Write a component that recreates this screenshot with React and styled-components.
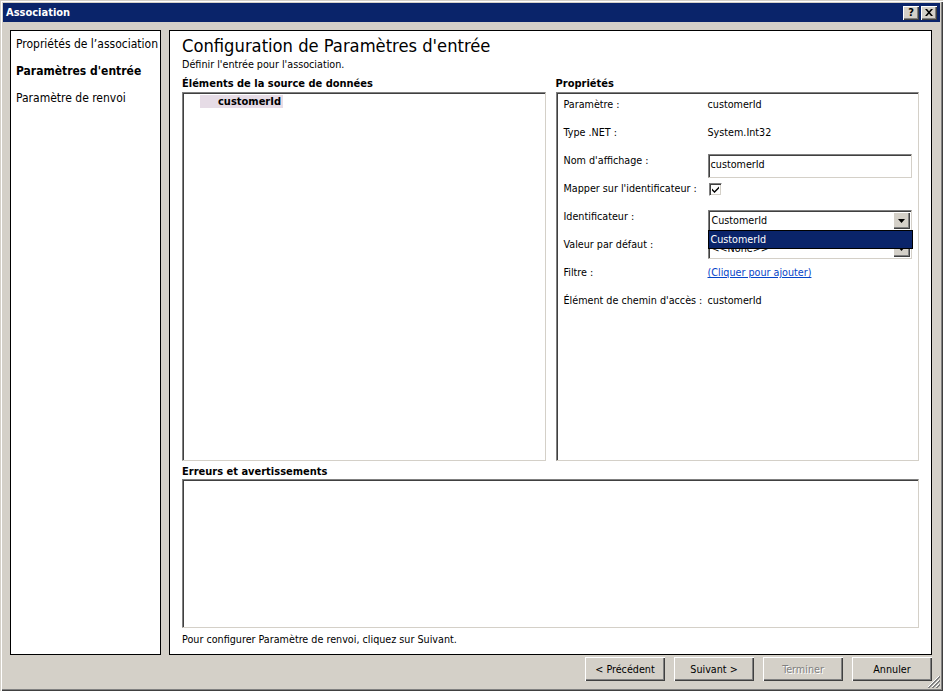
import React from "react";
import styled, { createGlobalStyle } from "styled-components";

const GlobalStyle = createGlobalStyle`
  html, body {
    margin: 0;
    padding: 0;
    background: #d4d0c8;
  }
  * {
    box-sizing: border-box;
  }
`;

const font = `"DejaVu Sans Condensed", "DejaVu Sans", Tahoma, sans-serif`;

const navItems = [
  { label: "Propriétés de l’association" },
  { label: "Paramètres d'entrée", active: true },
  { label: "Paramètre de renvoi" },
];

const props = [
  { label: "Paramètre :", value: "customerId" },
  { label: "Type .NET :", value: "System.Int32" },
  { label: "Nom d'affichage :", input: "customerId" },
  { label: "Mapper sur l'identificateur :", check: true },
  { label: "Identificateur :", combo: "CustomerId", open: true },
  { label: "Valeur par défaut :", combo: "<<None>>" },
  { label: "Filtre :", link: "(Cliquer pour ajouter)" },
  { label: "Élément de chemin d'accès :", value: "customerId" },
];

function ComboArrow() {
  return (
    <svg width="7" height="4" viewBox="0 0 7 4">
      <path d="M0 0h7L3.5 4z" fill="#000" />
    </svg>
  );
}

function PropValue({ row }) {
  if (row.input) return <TextInput>{row.input}</TextInput>;
  if (row.check)
    return (
      <CheckBox>
        <svg width="9" height="9" viewBox="0 0 9 9">
          <path d="M1 3.5l2.5 2.5L8 1.5v2L3.5 8 1 5.5z" fill="#000" />
        </svg>
      </CheckBox>
    );
  if (row.combo)
    return (
      <ComboWrap>
        <Combo>
          <ComboText>{row.combo}</ComboText>
          <ComboButton>
            <ComboArrow />
          </ComboButton>
        </Combo>
        {row.open && (
          <DropList>
            <DropItem>{row.combo}</DropItem>
          </DropList>
        )}
      </ComboWrap>
    );
  if (row.link) return <Link>{row.link}</Link>;
  return <ValueText>{row.value}</ValueText>;
}

export default function App() {
  return (
    <Window>
      <GlobalStyle />
      <TitleBar>
        <Title>Association</Title>
        <TitleButtons>
          <CaptionButton>?</CaptionButton>
          <CaptionButton>
            <svg width="8" height="7" viewBox="0 0 8 7">
              <path
                d="M0 0h2l2 2.2L6 0h2L5 3.5 8 7H6L4 4.8 2 7H0l3-3.5z"
                fill="#000"
              />
            </svg>
          </CaptionButton>
        </TitleButtons>
      </TitleBar>
      <Body>
        <Content>
          <NavPanel>
            {navItems.map((item) => (
              <NavItem key={item.label} active={item.active}>
                {item.label}
              </NavItem>
            ))}
          </NavPanel>
          <MainPanel>
            <Heading>Configuration de Paramètres d'entrée</Heading>
            <SubText>Définir l'entrée pour l'association.</SubText>
            <Columns>
              <Column>
                <SectionLabel>Éléments de la source de données</SectionLabel>
                <SunkenBox>
                  <TreeItem>customerId</TreeItem>
                </SunkenBox>
              </Column>
              <Column>
                <SectionLabel>Propriétés</SectionLabel>
                <SunkenBox>
                  <PropGrid>
                    {props.map((row) => (
                      <React.Fragment key={row.label}>
                        <PropLabel>{row.label}</PropLabel>
                        <PropCell>
                          <PropValue row={row} />
                        </PropCell>
                      </React.Fragment>
                    ))}
                  </PropGrid>
                </SunkenBox>
              </Column>
            </Columns>
            <SectionLabel>Erreurs et avertissements</SectionLabel>
            <ErrorBox />
            <Footnote>
              Pour configurer Paramètre de renvoi, cliquez sur Suivant.
            </Footnote>
          </MainPanel>
        </Content>
        <Footer>
          <Button>&lt; Précédent</Button>
          <Button>Suivant &gt;</Button>
          <Button disabled>Terminer</Button>
          <Button>Annuler</Button>
          <Grip>
            <svg width="13" height="13" viewBox="0 0 13 13">
              <path d="M12 1L1 12M12 5L5 12M12 9L9 12" stroke="#fff" />
              <path d="M13 1L1 13M13 5L5 13M13 9L9 13" stroke="#808080" />
              <path d="M13 2L2 13M13 6L6 13M13 10L10 13" stroke="#808080" />
            </svg>
          </Grip>
        </Footer>
      </Body>
    </Window>
  );
}

const Window = styled.div`
  width: 943px;
  height: 691px;
  display: flex;
  flex-direction: column;
  padding: 3px;
  background: #d4d0c8;
  font-family: ${font};
  font-size: 10.7px;
  color: #000;
  box-shadow: inset 1px 1px #d4d0c8, inset 2px 2px #fff,
    inset -1px -1px #404040, inset -2px -2px #808080;
`;

const TitleBar = styled.div`
  height: 19px;
  display: flex;
  align-items: center;
  justify-content: space-between;
  padding: 0 3px 0 3px;
  background: #0a246a;
`;

const Title = styled.div`
  color: #fff;
  font-weight: bold;
  font-size: 11px;
`;

const TitleButtons = styled.div`
  display: flex;
  gap: 2px;
`;

const CaptionButton = styled.div`
  width: 16px;
  height: 14px;
  display: flex;
  align-items: center;
  justify-content: center;
  background: #d4d0c8;
  font-weight: bold;
  font-size: 11px;
  box-shadow: inset 1px 1px #fff, inset -1px -1px #404040,
    inset -2px -2px #808080;
`;

const Body = styled.div`
  flex: 1;
  display: flex;
  flex-direction: column;
  padding: 8px 8px 0 7px;
  position: relative;
`;

const Content = styled.div`
  display: flex;
  gap: 8px;
  height: 625px;
`;

const NavPanel = styled.div`
  width: 151px;
  background: #fff;
  border: 1px solid #000;
`;

const NavItem = styled.div`
  height: 27px;
  line-height: 27px;
  padding-left: 5px;
  font-size: 12px;
  white-space: nowrap;
  font-weight: ${(p) => (p.active ? "bold" : "normal")};
`;

const MainPanel = styled.div`
  flex: 1;
  background: #fff;
  border: 1px solid #000;
  padding: 4px 12px 0 12px;
  display: flex;
  flex-direction: column;
`;

const Heading = styled.div`
  font-size: 18.2px;
  line-height: 22px;
`;

const SubText = styled.div`
  line-height: 14px;
  margin-top: 1px;
`;

const Columns = styled.div`
  display: grid;
  grid-template-columns: 1fr 1fr;
  gap: 10px;
  margin: 3px 0 2px 0;
`;

const Column = styled.div`
  display: flex;
  flex-direction: column;
`;

const SectionLabel = styled.div`
  font-weight: bold;
  font-size: 11px;
  line-height: 14px;
  margin-top: 2px;
  padding-left: ${(p) => (p.indent ? "1px" : "0")};
`;

const SunkenBox = styled.div`
  margin-top: 1px;
  height: 369px;
  background: #fff;
  border: 1px solid;
  border-color: #808080 #d4d0c8 #d4d0c8 #808080;
  box-shadow: inset 1px 1px #404040;
  position: relative;
`;

const TreeItem = styled.span`
  display: inline-block;
  margin: 2px 0 0 17px;
  padding: 0 2px 0 18px;
  line-height: 13px;
  font-size: 11px;
  background: #e6dce6;
  font-weight: bold;
`;

const PropGrid = styled.div`
  display: grid;
  grid-template-columns: 144px 1fr;
  grid-auto-rows: 28px;
  padding: 3px 6px 0 7px;
`;

const PropLabel = styled.div`
  line-height: 18px;
  white-space: nowrap;
`;

const PropCell = styled.div`
  position: relative;
`;

const ValueText = styled.div`
  line-height: 18px;
`;

const Link = styled.div`
  line-height: 18px;
  color: #0645c8;
  text-decoration: underline;
`;

const TextInput = styled.div`
  margin-top: 2px;
  width: 204px;
  height: 24px;
  line-height: 20px;
  padding-left: 2px;
  border: 1px solid;
  border-color: #808080 #d4d0c8 #d4d0c8 #808080;
  box-shadow: inset 1px 1px #404040;
`;

const CheckBox = styled.div`
  margin: 3px 0 0 1px;
  width: 13px;
  height: 13px;
  display: flex;
  align-items: center;
  justify-content: center;
  background: #fff;
  border: 1px solid;
  border-color: #808080 #fff #fff #808080;
  box-shadow: inset 1px 1px #404040, inset -1px -1px #d4d0c8;
`;

const ComboWrap = styled.div`
  margin-top: 2px;
  width: 204px;
  position: relative;
`;

const Combo = styled.div`
  height: 21px;
  display: flex;
  align-items: center;
  background: #fff;
  border: 1px solid;
  border-color: #808080 #d4d0c8 #d4d0c8 #808080;
  box-shadow: inset 1px 1px #404040;
  padding: 1px 1px 1px 3px;
`;

const ComboText = styled.div`
  flex: 1;
  line-height: 17px;
  white-space: nowrap;
`;

const ComboButton = styled.div`
  width: 17px;
  height: 17px;
  display: flex;
  align-items: center;
  justify-content: center;
  background: #d4d0c8;
  box-shadow: inset 1px 1px #fff, inset -1px -1px #404040,
    inset -2px -2px #808080;
`;

const DropList = styled.div`
  position: absolute;
  left: 0;
  top: 20px;
  width: 205px;
  height: 19px;
  background: #0a246a;
  border: 1px solid #000;
  z-index: 2;
`;

const DropItem = styled.div`
  color: #fff;
  line-height: 17px;
  padding-left: 2px;
`;

const ErrorBox = styled.div`
  margin-top: 0;
  height: 149px;
  border: 1px solid;
  border-color: #808080 #d4d0c8 #d4d0c8 #808080;
  box-shadow: inset 1px 1px #404040;
`;

const Footnote = styled.div`
  margin-top: 5px;
  line-height: 14px;
`;

const Footer = styled.div`
  flex: 1;
  display: flex;
  justify-content: flex-end;
  align-items: flex-start;
  gap: 9px;
  padding: 2px 0 0 0;
`;

const Button = styled.div`
  width: 80px;
  height: 24px;
  display: flex;
  align-items: center;
  justify-content: center;
  background: #d4d0c8;
  color: ${(p) => (p.disabled ? "#808080" : "#000")};
  text-shadow: ${(p) => (p.disabled ? "1px 1px #fff" : "none")};
  box-shadow: inset 1px 1px #fff, inset -1px -1px #404040,
    inset -2px -2px #808080;
`;

const Grip = styled.div`
  position: absolute;
  right: 0;
  bottom: 0;
  width: 13px;
  height: 13px;
  display: flex;
`;
